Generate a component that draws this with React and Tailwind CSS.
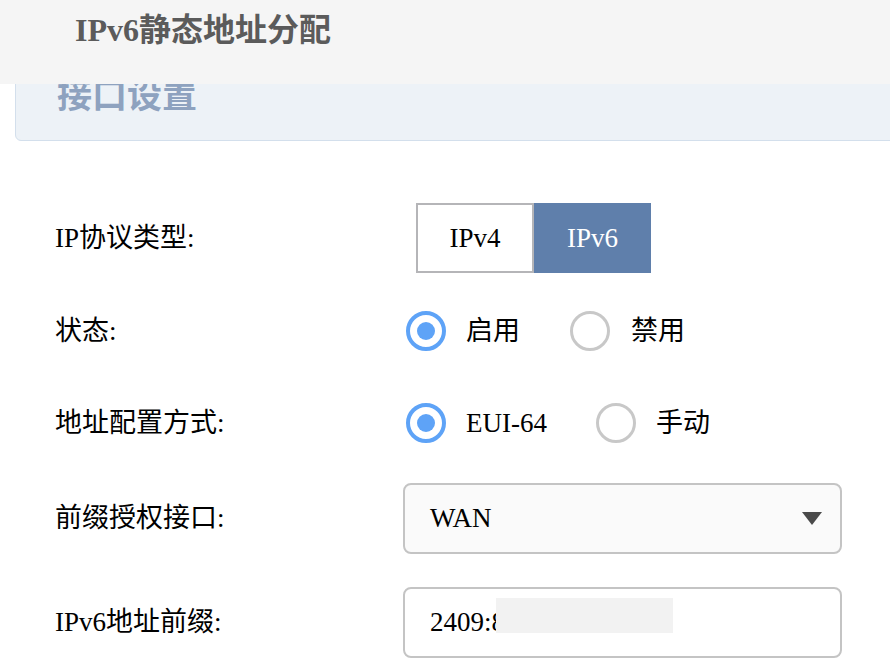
import React from 'react';

const Radio = ({ checked }) =>
    checked ? (
        <span className="w-[40px] h-[40px] rounded-full border-[4px] border-[#5ea3f7] bg-white flex items-center justify-center shrink-0">
            <span className="w-[18px] h-[18px] rounded-full bg-[#5ea3f7]" />
        </span>
    ) : (
        <span className="block w-[40px] h-[40px] rounded-full border-[3px] border-[#c8c8c8] bg-white shrink-0" />
    );

const Row = ({ label, className, children }) => (
    <div className={`flex items-center ${className}`}>
        <div className="w-[403px] shrink-0 pl-[55px] text-[27px] text-black">{label}</div>
        <div className="flex items-center flex-1">{children}</div>
    </div>
);

const App = () => {
    return (
        <div className="relative w-[890px] h-[670px] bg-white overflow-hidden font-['Liberation_Serif','Noto_Sans_CJK_SC',serif]">
            {/* sticky page header over the scrolled content */}
            <div className="absolute top-0 left-0 right-0 h-[84px] bg-[#f5f5f5] z-10 flex items-start pl-[75px] pt-[14px]">
                <h1 className="text-[32px] font-bold text-[#5b5b5b] leading-none">IPv6静态地址分配</h1>
            </div>

            {/* section panel */}
            <div className="ml-[15px] mr-[-20px] mt-[44px] h-[97px] bg-[#edf2f7] border border-[#d3dfec] rounded-md pl-[41px] pt-[34px]">
                <span className="block text-[35px] leading-none font-semibold text-[#8ea2bf]">接口设置</span>
            </div>

            <Row label="IP协议类型:" className="mt-[62px] h-[70px]">
                <div className="ml-[13px] flex h-[70px] text-[27px]">
                    <button className="w-[118px] h-full border-2 border-[#b5b5b8] bg-white text-black">IPv4</button>
                    <button className="w-[117px] h-full bg-[#5f7fab] text-white">IPv6</button>
                </div>
            </Row>

            <Row label="状态:" className="mt-[38px] h-[40px]">
                <div className="ml-[3px] flex items-center text-[27px] text-black">
                    <Radio checked />
                    <span className="ml-[20px]">启用</span>
                    <span className="ml-[50px]"><Radio /></span>
                    <span className="ml-[21px]">禁用</span>
                </div>
            </Row>

            <Row label="地址配置方式:" className="mt-[52px] h-[40px]">
                <div className="ml-[3px] flex items-center text-[27px] text-black">
                    <Radio checked />
                    <span className="ml-[20px]">EUI-64</span>
                    <span className="ml-[49px]"><Radio /></span>
                    <span className="ml-[20px]">手动</span>
                </div>
            </Row>

            <Row label="前缀授权接口:" className="mt-[40px] h-[71px]">
                <div className="w-[439px] h-[71px] border-2 border-[#c4c4c4] rounded-lg bg-[#fafafa] flex items-center justify-between pl-[25px] pr-[18px] text-[27px] text-black">
                    <span>WAN</span>
                    <svg width="20" height="13" viewBox="0 0 20 13">
                        <path d="M0 0 H20 L10 13 Z" fill="#4a4a4a" />
                    </svg>
                </div>
            </Row>

            <Row label="IPv6地址前缀:" className="mt-[33px] h-[71px]">
                <div className="relative w-[439px] h-[71px] border-2 border-[#c4c4c4] rounded-lg bg-white flex items-center pl-[25px] text-[27px] text-black">
                    <span>2409:8</span>
                    {/* masked value */}
                    <span className="absolute left-[91px] top-[9px] w-[177px] h-[35px] bg-[#f2f2f2]" />
                </div>
            </Row>
        </div>
    );
};

export default App;
